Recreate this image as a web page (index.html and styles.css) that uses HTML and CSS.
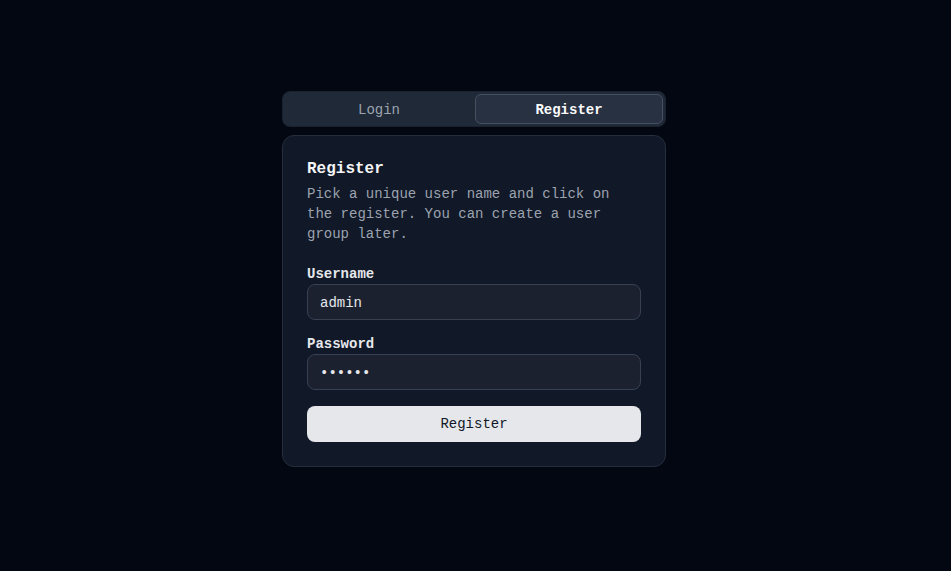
FILE: index.html
```html
<!DOCTYPE html>
<html lang="en">
<head>
<meta charset="utf-8">
<title>Register</title>
<link rel="stylesheet" href="styles.css">
</head>
<body>
<main class="wrap">
  <div class="tabs">
    <button class="tab">Login</button>
    <button class="tab active">Register</button>
  </div>
  <section class="card">
    <h1 class="title">Register</h1>
    <p class="desc">Pick a unique user name and click on the register. You can create a user group later.</p>
    <form class="form">
      <div class="field">
        <label class="label" for="u">Username</label>
        <input class="input" id="u" type="text" value="admin">
      </div>
      <div class="field">
        <label class="label" for="p">Password</label>
        <input class="input" id="p" type="password" value="secret">
      </div>
      <button type="button" class="submit">Register</button>
    </form>
  </section>
</main>
</body>
</html>
```
FILE: styles.css
```css
* { box-sizing: border-box; }
html, body { margin: 0; padding: 0; }
body {
  background: #030712;
  font-family: "Liberation Mono", "DejaVu Sans Mono", monospace;
  color: #e5e7eb;
  height: 571px;
}
.wrap {
  width: 384px;
  margin: 0 0 0 calc(50% - 193.5px);
  padding-top: 91px;
}
.tabs {
  display: grid;
  grid-template-columns: 1fr 1fr;
  gap: 2px;
  padding: 2px;
  height: 36px;
  border: 1px solid #1a2230;
  border-radius: 8px;
  background: #1f2937;
}
.tab {
  font-family: inherit;
  font-size: 14px;
  font-weight: 400;
  color: #9ca3af;
  background: transparent;
  border: 1px solid transparent;
  border-radius: 6px;
  height: 30px;
  padding: 1px 0 0;
  cursor: pointer;
}
.tab.active {
  background: #283142;
  border-color: #465061;
  color: #f9fafb;
  font-weight: 700;
}
.card {
  margin-top: 8px;
  background: #111827;
  border: 1px solid #252e3c;
  border-radius: 12px;
  padding: 24px;
}
.title {
  margin: 0;
  padding-top: 1px;
  font-size: 16px;
  line-height: 16px;
  font-weight: 700;
  color: #f3f4f6;
}
.desc {
  margin: 6px 0 0;
  padding-top: 1px;
  font-size: 14px;
  line-height: 20px;
  color: #9ca3af;
}
.form {
  margin-top: 20px;
  display: flex;
  flex-direction: column;
}
.field {
  display: flex;
  flex-direction: column;
  margin-bottom: 14px;
}
.field + .field { margin-bottom: 16px; }
.label {
  font-size: 14px;
  line-height: 19px;
  padding-top: 1px;
  font-weight: 700;
  color: #e5e7eb;
}
.input {
  height: 36px;
  width: 100%;
  background: #1c2130;
  border: 1px solid #374151;
  border-radius: 8px;
  padding: 1px 12px 0;
  font-family: inherit;
  font-size: 14px;
  color: #e5e7eb;
  outline: none;
}
.submit {
  height: 36px;
  width: 100%;
  background: #e5e7eb;
  color: #111827;
  border: none;
  border-radius: 8px;
  padding-top: 1px;
  font-family: inherit;
  font-size: 14px;
  font-weight: 500;
  cursor: pointer;
}
```
